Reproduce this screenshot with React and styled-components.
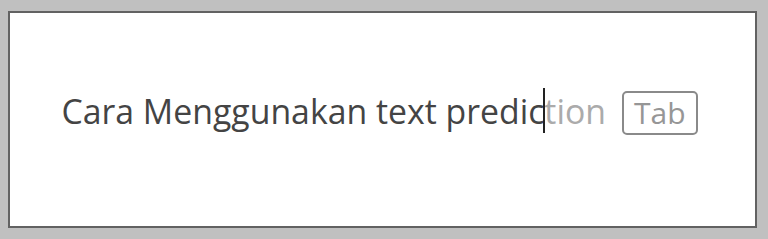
import React from "react";
import styled, { createGlobalStyle } from "styled-components";

const GlobalStyle = createGlobalStyle`
  html, body {
    margin: 0;
    padding: 0;
    background: #c0c0c0;
  }
`;

const Page = styled.div`
  width: 768px;
  height: 239px;
  padding: 11px 11px 11px 8px;
  box-sizing: border-box;
`;

const Frame = styled.div`
  height: 217px;
  box-sizing: border-box;
  background: #ffffff;
  border: 2px solid #626262;
  display: flex;
  align-items: center;
  justify-content: center;
  padding: 0 6px 18px 0;
`;

const Line = styled.div`
  display: flex;
  align-items: center;
  font-family: "Open Sans", "Noto Sans", sans-serif;
  font-size: 33.8px;
  color: #444444;
  white-space: pre;
`;

const Typed = styled.span`
  color: #444444;
`;

const Caret = styled.span`
  display: inline-block;
  width: 2px;
  height: 45px;
  background: #222222;
  margin: 0 -1px;
  position: relative;
  z-index: 1;
`;

const Suggestion = styled.span`
  color: #ababab;
`;

const KeyHint = styled.span`
  margin-left: 16px;
  margin-top: 4px;
  border: 2.5px solid #8a8a8a;
  border-radius: 5px;
  color: #969696;
  font-size: 30px;
  line-height: 40px;
  padding: 0 10px;
`;

export default function App() {
  return (
    <>
      <GlobalStyle />
      <Page>
        <Frame>
          <Line>
            <Typed>Cara Menggunakan text predic</Typed>
            <Caret />
            <Suggestion>tion</Suggestion>
            <KeyHint>Tab</KeyHint>
          </Line>
        </Frame>
      </Page>
    </>
  );
}
